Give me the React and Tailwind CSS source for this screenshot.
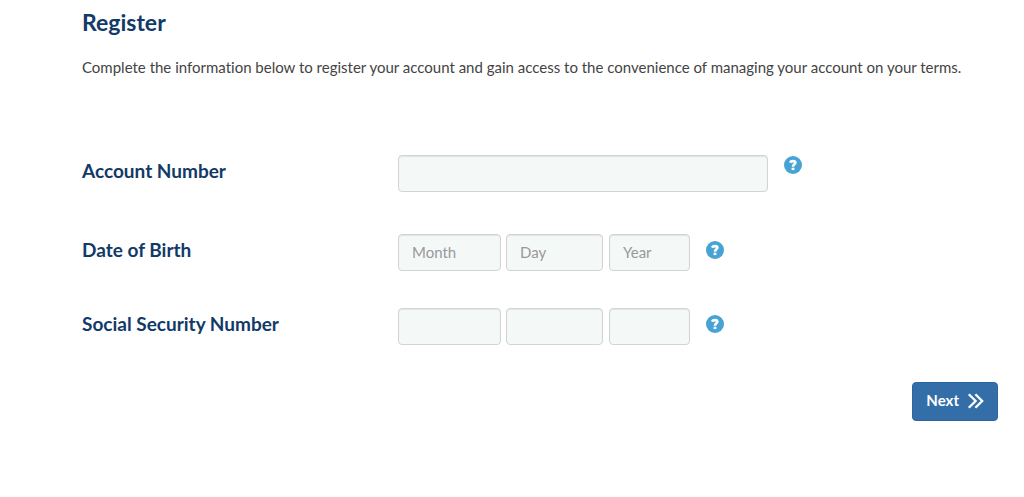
import { useState } from 'react';

const inputClass =
  'h-[37px] min-w-0 rounded border border-[#d2d4d4] bg-[#f4f8f7] px-[13px] pb-0.5 text-[15px] text-[#555] placeholder:text-[#999] shadow-[inset_0_1px_1px_rgba(0,0,0,0.08)] outline-none focus:border-[#46a3d4]';

function HelpButton({ label, className = '' }) {
  return (
    <button type="button" aria-label={label} className={`ml-4 shrink-0 cursor-pointer ${className}`}>
      <svg width="18" height="18" viewBox="0 0 18 18" fill="none" aria-hidden="true">
        <circle cx="9" cy="9" r="9" fill="#46a3d4" />
        <path d="M6 6.6 C6.6 5.3 7.6 5.1 9 5.1 C10.8 5.1 11.4 5.8 11.4 6.8 C11.4 8.4 9 8.3 9 10.7" stroke="white" strokeWidth="2.6" />
        <path d="M7.6 11.7 H10.4 V14.1 H7.6 Z" fill="white" />
      </svg>
    </button>
  );
}

function DoubleChevron() {
  return (
    <svg width="17" height="16" viewBox="0 0 17 16" fill="none" stroke="currentColor" strokeWidth="2.3" aria-hidden="true">
      <path d="M1.8 1.2 L8.6 8 L1.8 14.8" />
      <path d="M8.4 1.2 L15.2 8 L8.4 14.8" />
    </svg>
  );
}

export default function App() {
  const [form, setForm] = useState({
    account: '',
    month: '',
    day: '',
    year: '',
    ssn1: '',
    ssn2: '',
    ssn3: '',
  });

  const handleChange = (e) => {
    setForm({ ...form, [e.target.name]: e.target.value });
  };

  const labelClass = 'w-[316px] shrink-0 pt-0.5 text-[19px] leading-7 font-bold text-[#123a68]';

  return (
    <main className="min-h-screen bg-white pt-1.5 pr-[26px] pl-[82px] font-['Lato',sans-serif] [font-variant-ligatures:none]">
      <h1 className="text-[23px] leading-8 font-bold text-[#123a68]">Register</h1>
      <p className="mt-[17px] text-[15px] leading-6 text-[#444]">
        Complete the information below to register your account and gain access to the convenience of managing your account on your terms.
      </p>

      <form onSubmit={(e) => e.preventDefault()}>
        {/* Account number */}
        <div className="mt-[76px] flex items-start">
          <label htmlFor="account" className={labelClass}>Account Number</label>
          <input id="account" name="account" value={form.account} onChange={handleChange} className={`${inputClass} w-[370px]`} />
          <HelpButton label="Account number help" className="mt-px" />
        </div>

        {/* Date of birth */}
        <fieldset className="mt-[42px] flex items-start">
          <label htmlFor="month" className={labelClass}>Date of Birth</label>
          <input id="month" name="month" placeholder="Month" value={form.month} onChange={handleChange} className={`${inputClass} w-[103px]`} />
          <input name="day" aria-label="Day" placeholder="Day" value={form.day} onChange={handleChange} className={`${inputClass} ml-[5px] w-[97px]`} />
          <input name="year" aria-label="Year" placeholder="Year" value={form.year} onChange={handleChange} className={`${inputClass} ml-1.5 w-[81px]`} />
          <HelpButton label="Date of birth help" className="mt-[7px]" />
        </fieldset>

        {/* Social security number */}
        <fieldset className="mt-[37px] flex items-start">
          <label htmlFor="ssn1" className={labelClass}>Social Security Number</label>
          <input id="ssn1" name="ssn1" value={form.ssn1} onChange={handleChange} className={`${inputClass} w-[103px]`} />
          <input name="ssn2" aria-label="Second part" value={form.ssn2} onChange={handleChange} className={`${inputClass} ml-[5px] w-[97px]`} />
          <input name="ssn3" aria-label="Third part" value={form.ssn3} onChange={handleChange} className={`${inputClass} ml-1.5 w-[81px]`} />
          <HelpButton label="Social security number help" className="mt-[7px]" />
        </fieldset>

        <div className="mt-[37px] flex justify-end">
          <button
            type="submit"
            className="flex h-[39px] cursor-pointer items-center gap-2 rounded border border-[#2d659c] bg-[#336ea8] px-[13px] pb-0.5 text-[15px] font-bold text-white hover:bg-[#2d659c]"
          >
            Next
            <DoubleChevron />
          </button>
        </div>
      </form>
    </main>
  );
}
